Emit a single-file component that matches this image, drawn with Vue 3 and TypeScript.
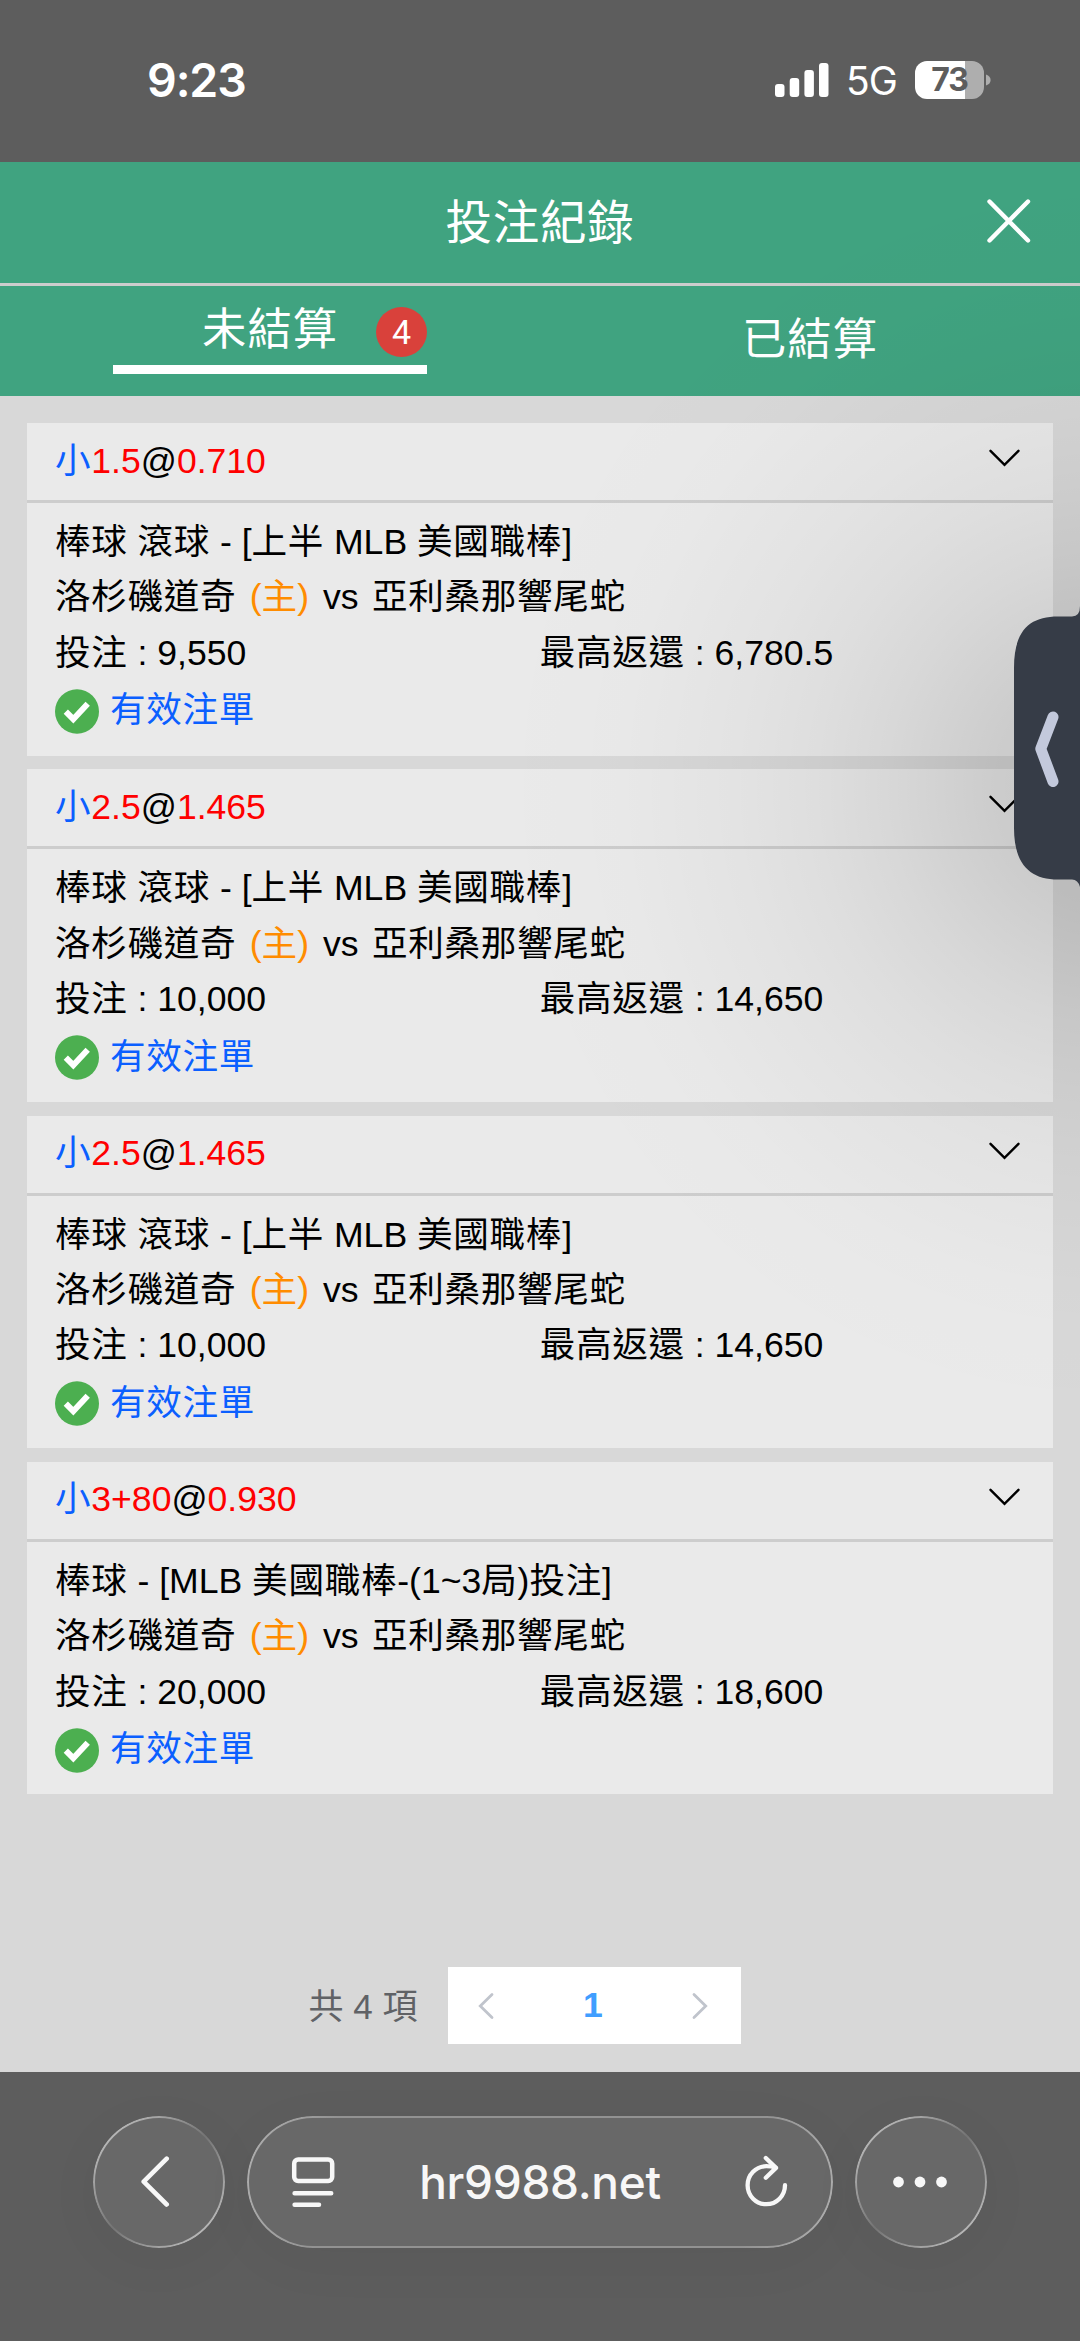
<script setup lang="ts">
interface Bet {
  line: string
  odds: string
  title: string
  stake: string
  payout: string
}

const league = '棒球 滾球 - [上半 MLB 美國職棒]'

const bets: Bet[] = [
  { line: '1.5', odds: '0.710', title: league, stake: '9,550', payout: '6,780.5' },
  { line: '2.5', odds: '1.465', title: league, stake: '10,000', payout: '14,650' },
  { line: '2.5', odds: '1.465', title: league, stake: '10,000', payout: '14,650' },
  { line: '3+80', odds: '0.930', title: '棒球 - [MLB 美國職棒-(1~3局)投注]', stake: '20,000', payout: '18,600' },
]

// Chinese runs are tracked slightly wider than Latin ones
const runs = (text: string) =>
  text.split(/([\u4e00-\u9fff]+)/).filter(Boolean).map((t) => ({ t, zh: /[\u4e00-\u9fff]/.test(t) }))
</script>

<template>
  <div class="screen">
    <div class="status">
      <span class="time">9:23</span>
      <div class="indicators">
        <svg class="signal" width="54" height="36" viewBox="0 0 54 36" fill="#fff">
          <rect x="0" y="22" width="9.5" height="13" rx="3" />
          <rect x="14.7" y="16" width="9.5" height="19" rx="3" />
          <rect x="29.4" y="8" width="9.5" height="27" rx="3" />
          <rect x="44" y="1" width="9.5" height="34" rx="3" />
        </svg>
        <span class="network">5G</span>
        <div class="battery"><span>73</span></div>
        <svg class="nub" width="5" height="12" viewBox="0 0 5 12"><path d="M0 0.5Q4.6 2 4.6 6T0 11.5Z" fill="#aeaeae" /></svg>
      </div>
    </div>

    <header class="header">
      <span class="title">投注紀錄</span>
      <svg class="close" width="48" height="48" viewBox="0 0 48 48" fill="none" stroke="#fff" stroke-width="4.4" stroke-linecap="round">
        <path d="M4.5 4.5L43 43.5M43 4.5L4.5 43.5" />
      </svg>
    </header>

    <nav class="tabs">
      <div class="tab">
        <div class="active">
          <span class="tab-text">未結算</span>
          <span class="badge">4</span>
        </div>
      </div>
      <div class="tab"><span class="tab-text">已結算</span></div>
    </nav>

    <main class="content">
      <div class="list">
        <section v-for="(bet, i) in bets" :key="i" class="card">
          <div class="card-head">
            <div class="pick"><span class="blue zh">小</span><span class="red">{{ bet.line }}</span><span>@</span><span class="red">{{ bet.odds }}</span></div>
            <svg width="34" height="20" viewBox="0 0 34 20" fill="none" stroke="#000" stroke-width="2.4" stroke-linecap="round">
              <path d="M2.5 2.8L16.5 16.8L30.5 2.8" />
            </svg>
          </div>
          <div class="card-body">
            <div class="row"><span v-for="(r, k) in runs(bet.title)" :key="k" :class="{ zh: r.zh }">{{ r.t }}</span></div>
            <div class="row"><span class="zh">洛杉磯道奇</span><span class="home"> (主) </span><span class="vs">vs </span><span class="zh">亞利桑那響尾蛇</span></div>
            <div class="row money">
              <div><span class="zh">投注</span> : {{ bet.stake }}</div>
              <div><span class="zh">最高返還</span> : {{ bet.payout }}</div>
            </div>
            <div class="row valid">
              <svg width="44" height="45" viewBox="0 0 44 45">
                <ellipse cx="22" cy="22.5" rx="22" ry="22.2" fill="#4caf50" />
                <path d="M10.8 22.7L18.3 30.2L32.7 14.8" fill="none" stroke="#fff" stroke-width="6" />
              </svg>
              <span class="zh">有效注單</span>
            </div>
          </div>
        </section>
      </div>

      <div class="pagination">
        <span class="total">共 4 項</span>
        <div class="pager">
          <svg width="18" height="30" viewBox="0 0 18 30"><path d="M15 3.5L3.3 15L15 26.5" /></svg>
          <b>1</b>
          <svg width="18" height="30" viewBox="0 0 18 30"><path d="M3 3.5L14.7 15L3 26.5" /></svg>
        </div>
      </div>
    </main>

    <footer class="browser">
      <div class="glass round">
        <svg width="36" height="56" viewBox="0 0 36 56" fill="none" stroke="#f7f7f7" stroke-width="4.6" stroke-linecap="round" stroke-linejoin="round">
          <path d="M25.7 4.7L2.7 27.7L25.7 50.5" />
        </svg>
      </div>
      <div class="glass url">
        <svg width="44" height="52" viewBox="0 0 44 52" fill="none" stroke="#f7f7f7" stroke-width="4.5" stroke-linecap="round">
          <rect x="3.2" y="3.4" width="38" height="21.6" rx="4" />
          <path d="M3.6 37.2H40.2M3.6 48.7H28" />
        </svg>
        <span class="address">hr9988.net</span>
        <svg width="44" height="54" viewBox="0 0 44 54" fill="none" stroke="#f7f7f7" stroke-width="4.3" stroke-linecap="round" stroke-linejoin="round">
          <path d="M40 30.2A18.7 19 0 1 1 21.3 11.2Q26.5 11.2 30.5 12.7" />
          <path d="M20.8 3L31 12.9L20.8 22.8" />
        </svg>
      </div>
      <div class="glass round">
        <svg width="56" height="14" viewBox="0 0 56 14" fill="#f7f7f7">
          <circle cx="5.5" cy="7" r="5.4" /><circle cx="27" cy="7" r="5.4" /><circle cx="48.5" cy="7" r="5.4" />
        </svg>
      </div>
    </footer>

    <div class="shade"></div>
    <svg class="drawer" width="66" height="284" viewBox="0 0 66 284">
      <path d="M66 0Q66 10.5 58 10.5H44C16 10.5 0 24 0 62V222C0 258 16 273.5 44 273.5H58Q64 273.5 66 281Z" fill="#363c47" />
      <path d="M39 111L26.8 142.8L39 175.5" fill="none" stroke="#c3c9dc" stroke-width="11" stroke-linecap="round" stroke-linejoin="round" />
    </svg>
  </div>
</template>

<style>
body {
  background: #5d5d5d;
}
</style>

<style scoped>
.screen {
  position: relative;
  width: 1080px;
  height: 2341px;
  overflow: hidden;
  display: flex;
  flex-direction: column;
  background: #d8d8d8;
  font-family: "Liberation Sans", "Noto Sans CJK TC", sans-serif;
  font-size: 35.6px;
  color: #000;
}
svg {
  display: block;
  flex: none;
}
.status {
  flex: none;
  height: 162px;
  box-sizing: border-box;
  padding: 0 89px 2px 147px;
  background: #5d5d5d;
  display: flex;
  justify-content: space-between;
  align-items: center;
  color: #fff;
  font-family: Inter, sans-serif;
}
.time {
  font-size: 46.5px;
  font-weight: 600;
  letter-spacing: -1.1px;
}
.indicators {
  display: flex;
  align-items: center;
}
.network {
  width: 69px;
  box-sizing: border-box;
  margin-left: 17px;
  font-size: 39px;
  line-height: 48px;
  letter-spacing: -1px;
  padding-top: 2px;
}
.battery {
  width: 69px;
  height: 38px;
  border-radius: 12px;
  background: linear-gradient(90deg, #fff 50.5px, #aeaeae 50.5px);
  color: #5d5d5d;
  font-size: 32px;
  font-weight: 700;
  line-height: 38px;
  text-align: center;
  letter-spacing: -1px;
}
.nub {
  margin-left: 2px;
}
.header {
  flex: none;
  height: 124px;
  box-sizing: border-box;
  border-bottom: 3px solid #cdcdcd;
  background: #40a380;
  color: #fff;
  display: grid;
  grid-template-columns: 1fr auto 1fr;
  align-items: center;
}
.title {
  grid-column: 2;
  font-size: 46.5px;
  line-height: 60px;
  letter-spacing: 0.8px;
  margin-top: 0;
}
.close {
  justify-self: end;
  margin-right: 47px;
  margin-top: -4px;
}
.tabs {
  flex: none;
  height: 110px;
  background: #40a380;
  color: #fff;
  display: flex;
}
.tab {
  flex: 1;
  display: flex;
  justify-content: center;
  align-items: center;
}
.tab-text {
  font-size: 44.3px;
  line-height: 60px;
  letter-spacing: 1px;
  margin-top: -2px;
}
.active {
  width: 314px;
  height: 88px;
  box-sizing: border-box;
  border-bottom: 9px solid #fff;
  margin-bottom: 22px;
  display: flex;
  align-items: flex-start;
  justify-content: flex-end;
  padding-top: 16px;
}
.badge {
  width: 51px;
  height: 50px;
  margin: 5px 0 0 38px;
  border-radius: 50%;
  background: #d9413b;
  font-family: Roboto, sans-serif;
  font-size: 34px;
  line-height: 50px;
  text-align: center;
}
.content {
  flex: none;
  height: 1676px;
  box-sizing: border-box;
  padding: 27px 27.5px 0 27px;
  display: flex;
  flex-direction: column;
}
.list {
  display: flex;
  flex-direction: column;
  gap: 13.8px;
}
.card {
  height: 332.5px;
  background: #eaeaea;
}
.card-head {
  height: 80px;
  box-sizing: border-box;
  border-bottom: 3px solid #cdcdcd;
  padding: 0 31px 0 28px;
  display: flex;
  justify-content: space-between;
  align-items: center;
}
.pick {
  margin-top: -9px;
}
.card-head svg {
  margin-top: -7px;
}
.blue,
.valid {
  color: #0b5fff;
}
.red {
  color: #f00;
}
.card-body {
  padding: 12px 28px 0;
}
.row {
  height: 55.4px;
  line-height: 55.4px;
  white-space: pre;
}
.zh {
  letter-spacing: 0.7px;
}
.home {
  color: #ff8c00;
  margin-left: 3.5px;
}
.vs {
  margin: 0 3.5px 0 4px;
}
.money {
  display: flex;
}
.money > div {
  width: 485px;
}
.valid {
  height: 60px;
  display: flex;
  align-items: center;
  gap: 11px;
}
.pagination {
  margin-top: 173px;
  display: flex;
  align-items: center;
  padding-left: 281.5px;
}
.total {
  width: 139.5px;
  margin-top: -5px;
  font-size: 35px;
  color: #606266;
}
.pager {
  width: 293px;
  height: 77px;
  box-sizing: border-box;
  padding: 0 32px 0 29px;
  background: #fff;
  display: flex;
  align-items: center;
  justify-content: space-between;
}
.pager svg {
  fill: none;
  stroke: #c0c4cc;
  stroke-width: 2.8;
  stroke-linecap: round;
}
.pager b {
  color: #409eff;
}
.browser {
  flex: 1;
  background: #5d5d5d;
  display: flex;
  justify-content: center;
  align-items: flex-start;
  gap: 22px;
  padding-top: 43.5px;
}
.glass {
  position: relative;
  height: 132px;
  border-radius: 66px;
  background: #686868;
  box-shadow: 0 12px 60px rgba(0, 0, 0, 0.04);
  display: flex;
  align-items: center;
  justify-content: center;
}
/* Rim light, brightest at the top-left and bottom-right */
.glass::before {
  content: "";
  position: absolute;
  inset: 0;
  border-radius: inherit;
  padding: 2px;
  background: linear-gradient(135deg, #b5b5b5 15%, #9a9a9a 30%, #747474 50%, #9a9a9a 70%, #b5b5b5 85%);
  mask: linear-gradient(#000 0 0) content-box exclude, linear-gradient(#000 0 0);
}
.round {
  width: 132px;
}
.url {
  width: 586px;
  box-sizing: border-box;
  padding: 0 44px;
  justify-content: space-between;
}
.url::before {
  background: linear-gradient(100deg, #b0b0b0 0, #929292 15%, #929292 85%, #b0b0b0 100%);
}
.address {
  font-family: Inter, sans-serif;
  font-size: 46px;
  font-weight: 500;
  color: #f7f7f7;
  letter-spacing: -0.3px;
}
/* Soft shadow cast by the drawer handle across the page */
.shade {
  position: absolute;
  left: 0;
  right: 0;
  top: 162px;
  height: 1330px;
  pointer-events: none;
  background: radial-gradient(ellipse 620px 640px at 1110px 625px, rgba(0, 0, 0, 0.145) 0, rgba(0, 0, 0, 0.13) 18%, rgba(0, 0, 0, 0.08) 36%, rgba(0, 0, 0, 0.052) 48%, rgba(0, 0, 0, 0.03) 60%, rgba(0, 0, 0, 0.008) 80%, transparent 100%);
}
.drawer {
  position: absolute;
  right: 0;
  top: 606px;
}
</style>
